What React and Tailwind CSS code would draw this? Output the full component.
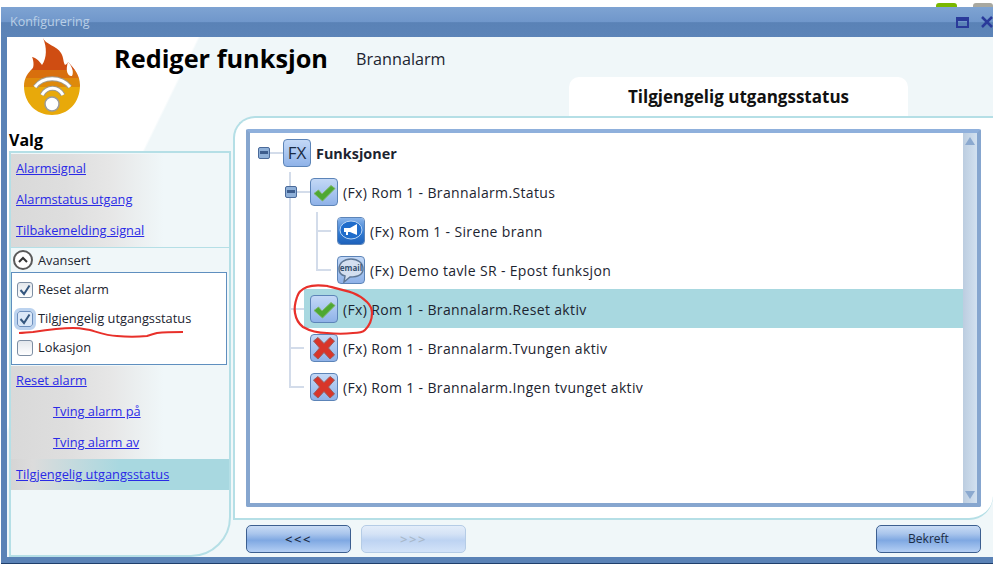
const font = { fontFamily: '"Open Sans", sans-serif' };

const Tile = ({ children }) => (
  <div className="w-[28px] h-[28px] shrink-0 rounded-[4px] border border-[#5c84b8] bg-[linear-gradient(180deg,#c3d8f6_0%,#a9c6f0_50%,#8fb2e8_100%)] flex items-center justify-center overflow-hidden">
    {children}
  </div>
);

const CheckIcon = () => (
  <svg width="26" height="26" viewBox="0 0 26 26">
    <path d="M3 14.5 L7.5 11 L11 15 L20 6.5 L24 9.5 L11.5 22 Z" fill="#4ea832" stroke="#7fb46a" strokeWidth="1" />
  </svg>
);

const CrossIcon = () => (
  <svg width="26" height="26" viewBox="0 0 26 26">
    <path d="M2.5 6 L7 2.5 L13 8.5 L19 2.5 L23.5 6 L17.5 13 L23.5 20 L19 24 L13 17.5 L7 24 L2.5 20 L8.5 13 Z" fill="#d8352a" stroke="#9c5d5d" strokeWidth="1" />
  </svg>
);

const SirenIcon = () => (
  <div className="w-[28px] h-[28px] flex items-center justify-center bg-[linear-gradient(180deg,#8fb8ec_0%,#2f78d0_60%,#1c5fb8_100%)]">
    <svg width="24" height="24" viewBox="0 0 24 24">
      <ellipse cx="12" cy="11" rx="11" ry="9" fill="#1f6ccb" stroke="#b9d4f3" strokeWidth="1" />
      <path d="M5 9 L11 9 L18 5 L18 16 L11 13 L9 13 L9 16 L7 16 L7 13 L5 13 Z" fill="#ffffff" />
    </svg>
  </div>
);

const EmailIcon = () => (
  <svg width="26" height="26" viewBox="0 0 26 26">
    <path d="M13 2 C20 2 25 6 25 12 C25 18 20 20 12 20 L6 25 L7 19 C3 18 1 16 1 12 C1 6 6 2 13 2 Z" fill="#d4dff0" stroke="#5f7896" strokeWidth="1.5" />
    <text x="13" y="14" textAnchor="middle" fontSize="8" fontWeight="700" fill="#35506f" fontFamily="Open Sans, sans-serif">email</text>
  </svg>
);

const Expander = () => (
  <div className="relative w-[12px] h-[12px] rounded-[2px] border border-[#4a6a9a] bg-[#8fb0d8] flex items-center justify-center">
    <div className="w-[8px] h-[3px] bg-[#3d5d8d]" />
  </div>
);

const TreeRow = ({ indent, exp, expLeft, selected, icon, label, bold }) => (
  <div className="flex h-[39px]">
    <div className="shrink-0 flex items-center" style={{ width: indent, paddingLeft: expLeft }}>
      {exp && <Expander />}
    </div>
    <div className={`flex-1 flex items-center pl-[6px] gap-[5px] ${selected ? "bg-[#a8d8e0]" : ""}`}>
      {icon}
      <span className={`text-[#1c2430] pt-[2px] ${bold ? "font-bold text-[14.4px]" : "text-[14px] tracking-[0.35px]"}`}>{label}</span>
    </div>
  </div>
);

const CheckBox = ({ checked, hover, label }) => (
  <div className="flex items-center h-[29px] pl-[5px] gap-[5px]">
    <div className={`w-[16px] h-[16px] rounded-[3px] border flex items-center justify-center ${hover ? "border-[#6d8fbd] bg-[#dbe8f8] outline-[3px] outline-[#bcd3ef]" : "border-[#7d8ea3] bg-[linear-gradient(180deg,#e3e7ec,#ffffff)]"}`}>
      {checked && (
        <svg width="14" height="14" viewBox="0 0 14 14">
          <path d="M2.5 7 L6 11 L11.5 2.5" fill="none" stroke="#35577f" strokeWidth="2" />
        </svg>
      )}
    </div>
    <span className="text-[12.8px] text-[#1c2430]">{label}</span>
  </div>
);

const NavLink = ({ children, sub, selected }) => (
  <div className={`h-[31px] flex items-center ${sub ? "pl-[42px]" : "pl-[5px]"} ${selected ? "bg-[linear-gradient(90deg,#d5d5d5_0%,#dcdcdc_10%,#a8d8e0_50%)]" : "pb-[2px]"}`}>
    <a href="#" className="text-[12.8px] text-[#2a2ae6] underline">{children}</a>
  </div>
);

const Button = ({ children, disabled, arrows }) => (
  <button
    type="button"
    className={`w-[105px] h-[28px] rounded-[5px] border leading-none ${arrows ? "text-[13px] font-semibold tracking-[1.5px]" : "text-[12px]"} ${disabled ? "border-[#b5cce6] text-[#a9b8ca] bg-[linear-gradient(180deg,#e3edfa_0%,#d5e3f6_30%,#bdd3f2_55%,#d3e3f8_100%)]" : "border-[#3c5f90] text-[#1c2c44] bg-[linear-gradient(180deg,#c9dcf5_0%,#a9c5ec_30%,#7fa8e2_55%,#b4cff4_100%)]"}`}
  >
    {children}
  </button>
);

const TreeLines = () => (
  <svg className="absolute left-0 top-0 pointer-events-none" width="340" height="270" viewBox="250 133 340 270">
    <g stroke="#d3dcea" strokeWidth="2" fill="none">
      <path d="M270 153 H283" />
      <path d="M290 172 V387 H304" />
      <path d="M290 309 H304 M290 348 H304" />
      <path d="M297 192 H310" />
      <path d="M317 212 V270 H331" />
      <path d="M317 231 H331" />
    </g>
  </svg>
);

const Logo = () => (
  <svg width="60" height="80" viewBox="0 0 60 80">
    <defs>
      <clipPath id="flame">
        <path d="M19 0 C21 6 33 8 37 15 C40 20 39 24 41 27 C43 26 44 25 44 24 C50 30 56 37 56 47 C56 65 44 77 28 77 C12 77 0 65 0 48 C0 40 4 35 8 31 C10 30 10 23 8 19 C13 20 16 24 18 27 C23 20 23 9 19 0 Z" />
      </clipPath>
    </defs>
    <g clipPath="url(#flame)">
      <rect x="0" y="0" width="60" height="32" fill="#cf4d12" />
      <rect x="0" y="32" width="60" height="8" fill="#d86f0d" />
      <rect x="0" y="40" width="60" height="9" fill="#de8a0b" />
      <rect x="0" y="49" width="60" height="31" fill="#e8a90a" />
    </g>
    <path d="M44 24 C48 28 50 34 48 38 C44 39 41 33 44 24 Z" fill="#fff" />
    <g fill="none">
      <path d="M11 49 C19 38 37 38 46 49" stroke="#a09a8c" strokeWidth="5" />
      <path d="M11 49 C19 38 37 38 46 49" stroke="#fff" strokeWidth="3" />
      <path d="M18 57 C23 48 34 48 39 57" stroke="#a09a8c" strokeWidth="5" />
      <path d="M18 57 C23 48 34 48 39 57" stroke="#fff" strokeWidth="3" />
    </g>
    <circle cx="28" cy="66" r="7" fill="#fff" stroke="#9a9a9a" strokeWidth="1.5" />
  </svg>
);

const leftGray = "bg-[linear-gradient(90deg,#d9d9d9_0%,#dedede_25%,#e6e6e6_45%,#f0f7f9_70%)]";

export default function App() {
  return (
    <div className="relative w-[1000px] h-[567px] bg-white overflow-hidden" style={font}>
      <div className="absolute left-[936px] top-[3px] w-[21px] h-[4px] rounded-t-[3px] bg-[#7ab800]" />
      <div className="absolute left-[973px] top-[3px] w-[20px] h-[4px] rounded-t-[3px] bg-[#a8a8a0]" />

      <div className="ml-[1px] pt-[7px] w-[992px] h-[564px] flex flex-col">
        <div className="h-[30px] flex items-center pl-[9px] bg-[linear-gradient(180deg,#7ea3d2_0%,#7097cb_50%,#5a82b6_52%,#5c84b8_100%)]">
          <span className="text-[12.5px] text-[#b9cfe6]">Konfigurering</span>
          <div className="ml-auto flex items-center gap-[12px]">
            <div className="w-[13px] h-[11px] border-2 border-t-[4px] border-[#2a3a9a]" />
            <svg width="12" height="12" viewBox="0 0 12 12">
              <path d="M1 1 L11 11 M11 1 L1 11" stroke="#2a3a9a" strokeWidth="2.5" />
            </svg>
          </div>
        </div>

        <div className="flex-1 flex flex-col pl-[6px] pb-[6px] bg-[#5a82b6] border-b border-[#1f3f6b]">
          <div className="flex-1 flex flex-col bg-[linear-gradient(116deg,#ffffff_0%,#ffffff_15.4%,#f0f7f9_15.6%)]">
            <div className="h-[79px] flex">
              <div className="pl-[17px] pt-[1px] w-[107px] shrink-0">
                <Logo />
              </div>
              <div className="pt-[3px] text-[25.3px] leading-[36px] font-bold text-black">Rediger funksjon</div>
              <div className="pt-[10px] ml-[28px] text-[16.2px] leading-[24px] text-[#1c2430]">Brannalarm</div>
              <div className="ml-auto mr-[85px] self-end w-[339px] h-[39px] bg-white rounded-t-[10px] flex items-center justify-center text-[17px] font-bold text-[#111]">
                Tilgjengelig utgangsstatus
              </div>
            </div>

            <div className="flex-1 flex">
              <div className="w-[224px] shrink-0 flex flex-col pl-[2px]">
                <div className="h-[35px] pt-[12px] text-[16px] leading-[24px] font-bold text-black">Valg</div>
                <div className="flex-1 flex flex-col border-2 border-[#b5dfe6] rounded-br-[40px] bg-[#f0f7f9] overflow-hidden pt-[1px]">
                  <div className={`${leftGray} border-b border-[#b5dfe6]`}>
                    <NavLink>Alarmsignal</NavLink>
                    <NavLink>Alarmstatus utgang</NavLink>
                    <NavLink>Tilbakemelding signal</NavLink>
                  </div>
                  <div className="h-[24px] flex items-center gap-[5px] pl-[2px]">
                    <div className="w-[20px] h-[20px] rounded-full border-2 border-[#5a5a5a] bg-white flex items-center justify-center">
                      <svg width="12" height="12" viewBox="0 0 12 12">
                        <path d="M2 8 L6 4 L10 8" fill="none" stroke="#333" strokeWidth="2" />
                      </svg>
                    </div>
                    <span className="text-[12.8px] text-[#1c2430] pt-[1px]">Avansert</span>
                  </div>
                  <div className="mr-[2px] border border-[#5f8fbf] bg-white mb-[1px] py-[2px]">
                    <CheckBox checked label="Reset alarm" />
                    <CheckBox checked hover label="Tilgjengelig utgangsstatus" />
                    <CheckBox label="Lokasjon" />
                  </div>
                  <div className={leftGray}>
                    <NavLink>Reset alarm</NavLink>
                    <NavLink sub>Tving alarm på</NavLink>
                    <NavLink sub>Tving alarm av</NavLink>
                  </div>
                  <NavLink selected>Tilgjengelig utgangsstatus</NavLink>
                </div>
              </div>

              <div className="flex-1 flex flex-col pl-[2px]">
                <div className="h-[404px] border-2 border-r-0 border-[#b5dfe6] rounded-tl-[22px] rounded-br-[24px] bg-white pl-[11px] pr-[12px] pt-[11px]">
                  <div className="h-[378px] border-4 border-t-[#8fb0dc] border-l-[#86a6cf] border-b-[#86a6cf] border-r-[#86a6cf] rounded-[2px] bg-white flex">
                    <div className="relative flex-1 flex flex-col">
                      <TreeLines />
                      <TreeRow indent={27} exp expLeft={8} icon={<Tile><span className="text-[17px] leading-none text-[#1a2a44]">FX</span></Tile>} label="Funksjoner" bold />
                      <TreeRow indent={54} exp expLeft={35} icon={<Tile><CheckIcon /></Tile>} label="(Fx) Rom 1 - Brannalarm.Status" />
                      <TreeRow indent={81} icon={<Tile><SirenIcon /></Tile>} label="(Fx) Rom 1 - Sirene brann" />
                      <TreeRow indent={81} icon={<Tile><EmailIcon /></Tile>} label="(Fx) Demo tavle SR - Epost funksjon" />
                      <TreeRow indent={54} selected icon={<Tile><CheckIcon /></Tile>} label="(Fx) Rom 1 - Brannalarm.Reset aktiv" />
                      <TreeRow indent={54} icon={<Tile><CrossIcon /></Tile>} label="(Fx) Rom 1 - Brannalarm.Tvungen aktiv" />
                      <TreeRow indent={54} icon={<Tile><CrossIcon /></Tile>} label="(Fx) Rom 1 - Brannalarm.Ingen tvunget aktiv" />
                    </div>
                    <div className="w-[14px] shrink-0 flex flex-col items-center justify-between py-[4px] bg-[linear-gradient(90deg,#bccde0,#d2e1f0)]">
                      <div className="w-0 h-0 border-x-[5px] border-x-transparent border-b-[8px] border-b-[#8ba9cf]" />
                      <div className="w-0 h-0 border-x-[5px] border-x-transparent border-t-[8px] border-t-[#8ba9cf]" />
                    </div>
                  </div>
                </div>
                <div className="flex-1 flex items-start pt-[5px] pl-[13px] pr-[12px] gap-[10px]">
                  <Button arrows>&lt;&lt;&lt;</Button>
                  <Button arrows disabled>&gt;&gt;&gt;</Button>
                  <div className="ml-auto">
                    <Button>Bekreft</Button>
                  </div>
                </div>
              </div>
            </div>
          </div>
        </div>
      </div>

      <svg className="absolute left-0 top-0 pointer-events-none" width="1000" height="567" viewBox="0 0 1000 567">
        <path d="M19 333 C24 333 28 332 33 332 C46 330 60 328 73 328 C80 328 84 329 90 330 C100 333 108 336 117 336 C127 337 137 337 147 336 C150 335 153 334 157 333 C166 332 174 332 183 332" fill="none" stroke="#e8302a" strokeWidth="2" />
        <path d="M328 286 C320 285 312 285 307 287 C300 290 298 293 297 297 C295 303 294 308 295 313 C296 319 299 324 303 327 C310 331 319 333 327 333 C336 334 345 334 353 333 C359 333 363 332 365 330 C369 326 372 320 372 313 C372 309 370 305 367 302 C363 298 358 295 353 293 C344 290 335 288 327 286" fill="none" stroke="#e8302a" strokeWidth="2.2" />
      </svg>
    </div>
  );
}
